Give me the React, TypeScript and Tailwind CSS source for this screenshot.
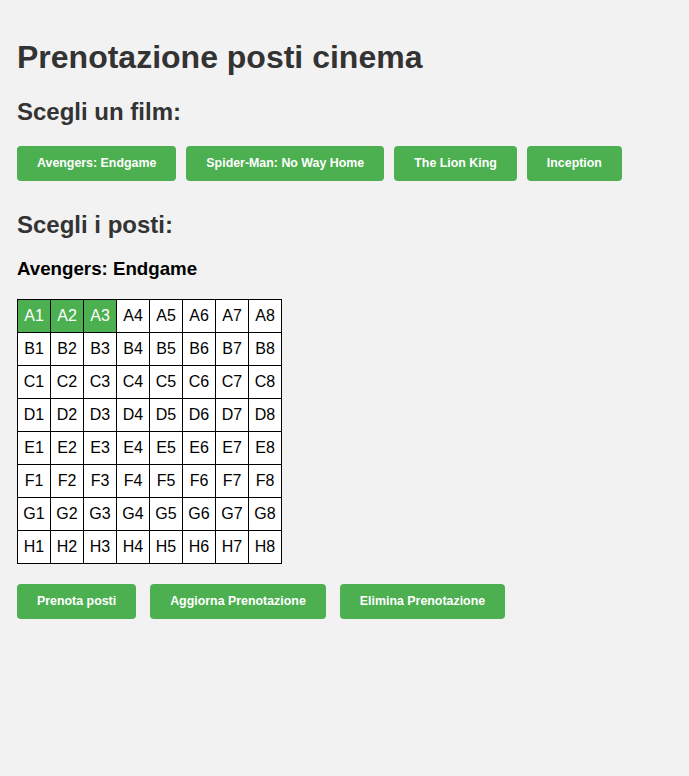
import { useState } from "react";

const MOVIES = ["Avengers: Endgame", "Spider-Man: No Way Home", "The Lion King", "Inception"];
const ROWS = ["A", "B", "C", "D", "E", "F", "G", "H"];
const COLS = [1, 2, 3, 4, 5, 6, 7, 8];

export default function App() {
  const [movie, setMovie] = useState(MOVIES[0]);
  const [selected, setSelected] = useState<string[]>(["A1", "A2", "A3"]);

  const toggleSeat = (seat: string) => {
    setSelected((prev) => (prev.includes(seat) ? prev.filter((s) => s !== seat) : [...prev, seat]));
  };

  return (
    <div className="min-h-[776px] bg-[#f2f2f2] px-[17px] pt-[39px] font-['Liberation_Sans',Arial,sans-serif]">
      <h1 className="text-[32px] font-bold leading-[37px] text-[#333]">Prenotazione posti cinema</h1>

      <h2 className="mt-[22px] text-[24px] font-bold leading-[28px] text-[#333]">Scegli un film:</h2>
      <div className="mt-[20px] flex gap-[10px]">
        {MOVIES.map((m) => (
          <button
            key={m}
            onClick={() => setMovie(m)}
            className="h-[35px] rounded-[4px] bg-[#4caf50] px-5 text-[12.4px] font-bold text-white"
          >
            {m}
          </button>
        ))}
      </div>

      <h2 className="mt-[30px] text-[24px] font-bold leading-[28px] text-[#333]">Scegli i posti:</h2>
      <h3 className="mt-[19px] text-[18.72px] font-bold leading-[21px] text-black">{movie}</h3>

      <div className="mt-[20px] grid w-max grid-cols-[repeat(8,33px)] border-l border-t border-black">
        {ROWS.map((r) =>
          COLS.map((c) => {
            const seat = `${r}${c}`;
            const on = selected.includes(seat);
            return (
              <div
                key={seat}
                onClick={() => toggleSeat(seat)}
                className={`flex h-[33px] cursor-pointer items-center justify-center border-b border-r border-black text-[16px] ${
                  on ? "bg-[#4caf50] text-white" : "bg-white text-black"
                }`}
              >
                {seat}
              </div>
            );
          })
        )}
      </div>

      <div className="mt-[20px] flex gap-[14px]">
        {["Prenota posti", "Aggiorna Prenotazione", "Elimina Prenotazione"].map((label) => (
          <button
            key={label}
            className="h-[35px] rounded-[4px] bg-[#4caf50] px-5 text-[12.4px] font-bold text-white"
          >
            {label}
          </button>
        ))}
      </div>
    </div>
  );
}
